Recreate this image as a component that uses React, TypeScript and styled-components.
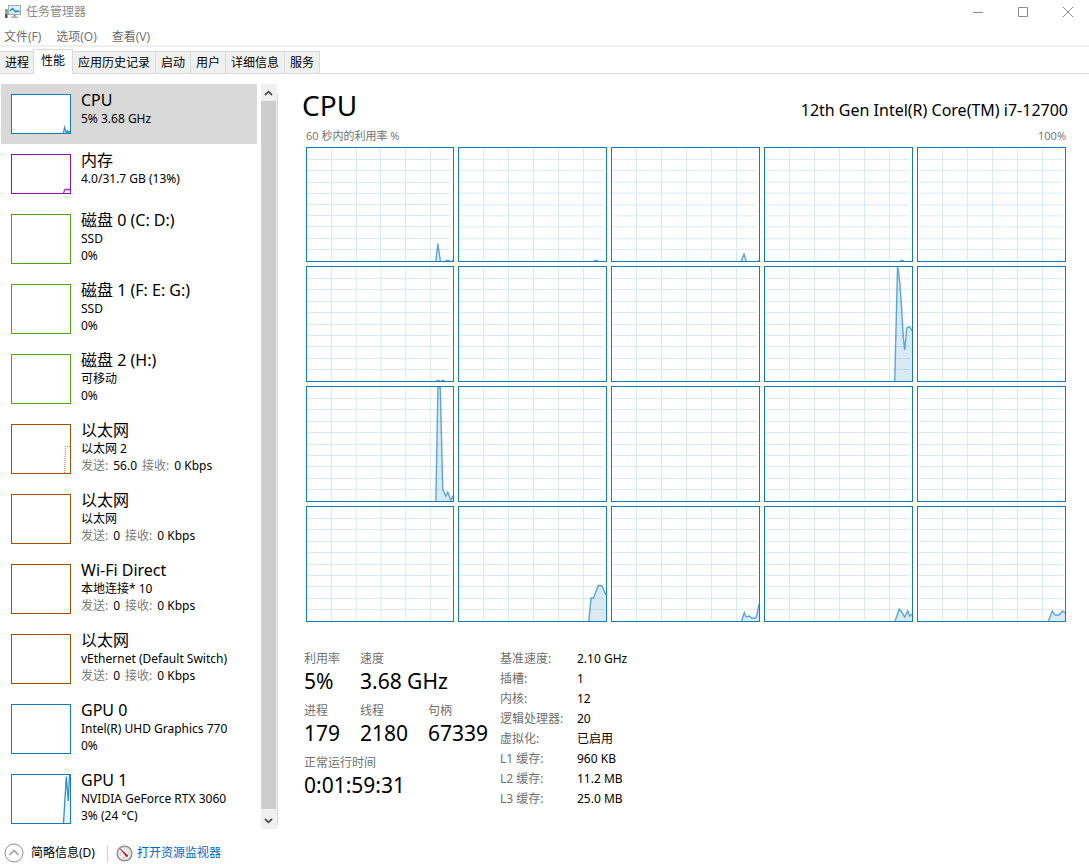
import React from 'react';
import styled, { createGlobalStyle } from 'styled-components';

const GlobalStyle = createGlobalStyle`
  * { box-sizing: border-box; }
  body {
    margin: 0;
    background: #fff;
    color: #000;
    font-family: "Noto Sans", "Noto Sans CJK SC", sans-serif;
    font-size: 12px;
    line-height: 16px;
  }
  button { font: inherit; color: inherit; border: 0; padding: 0; background: none; text-align: left; }
  h1, h2, p, dl, dt, dd { margin: 0; font-weight: 400; }
`;

const Window = styled.div`
  display: flex;
  flex-direction: column;
  min-height: 100vh;
`;

const TitleBar = styled.header`
  display: flex;
  align-items: center;
  height: 23px;
  padding: 0 1px 0 5px;
  gap: 5px;
  color: #8c8c8c;
`;

const WindowTitle = styled.span`
  flex: 1;
`;

const WindowButton = styled.button`
  display: flex;
  align-items: center;
  justify-content: center;
  width: 40px;
  height: 22px;
`;

const MenuBar = styled.nav`
  display: flex;
  gap: 15px;
  height: 24px;
  padding: 5px 4px 0;
  color: #6d6d6d;
  border-bottom: 2px solid #f0f0f0;
  font-family: "Open Sans", "Noto Sans CJK SC", sans-serif;
`;

const TabStrip = styled.div`
  display: flex;
  align-items: flex-end;
  height: 27px;
  border-bottom: 1px solid #d9d9d9;
`;

const Tab = styled.button<{ $active?: boolean }>`
  height: ${p => (p.$active ? 25 : 22)}px;
  margin: ${p => (p.$active ? '0 0 -1px -2px' : '0')};
  padding: ${p => (p.$active ? '0 7px 2px' : '0 5px')};
  background: ${p => (p.$active ? '#fff' : '#f0f0f0')};
  border: 1px solid #d9d9d9;
  border-bottom: 0;
  border-left-width: ${p => (p.$active ? 1 : 0)}px;
  white-space: nowrap;
`;

const Body = styled.div`
  display: flex;
  align-items: flex-start;
  padding-top: 10px;
`;

const Sidebar = styled.aside`
  display: flex;
  flex: none;
`;

const ResourceList = styled.div`
  width: 261px;
  padding: 0 4px 0 1px;
`;

const Resource = styled.button<{ $tall?: boolean; $selected?: boolean }>`
  display: flex;
  align-items: flex-start;
  gap: 10px;
  width: 100%;
  height: ${p => (p.$tall ? 70 : 60)}px;
  padding: 6px 0 0 10px;
  background: ${p => (p.$selected ? '#d9d9d9' : 'transparent')};
`;

const Thumb = styled.span<{ $color: string; $tall?: boolean }>`
  flex: none;
  width: 60px;
  height: ${p => (p.$tall ? 50 : 40)}px;
  margin-top: 4px;
  border: 1px solid ${p => p.$color};
  background: #fff;
  svg { display: block; width: 100%; height: 100%; }
`;

const ResourceText = styled.span`
  display: flex;
  flex-direction: column;
  line-height: 17px;
  white-space: nowrap;
`;

const ResourceName = styled.span`
  font-size: 16px;
  line-height: 20px;
`;

const Traffic = styled.span`
  display: flex;
  gap: 5px;
`;

const Muted = styled.span`
  color: #7a7a7a;
`;

const ScrollColumn = styled.div`
  display: flex;
  align-self: stretch;
  margin-bottom: 5px;
  padding-right: 1px;
  background: linear-gradient(#d9d9d9, #d9d9d9) right 0 top 10px / 1px calc(100% - 14px) no-repeat;
`;

const ScrollBar = styled.div`
  display: flex;
  flex-direction: column;
  width: 16px;
  background: #f0f0f0;
`;

const ScrollArrow = styled.button`
  display: flex;
  align-items: center;
  justify-content: center;
  height: 17px;
  padding-right: 1px;
`;

const ScrollThumb = styled.div`
  flex: 1;
  width: 15px;
  margin-bottom: 3px;
  background: #cdcdcd;
`;

const Main = styled.main`
  flex: 1;
  min-width: 0;
  padding: 0 23px 0 28px;
`;

const MainHeader = styled.div`
  display: flex;
  align-items: flex-start;
  justify-content: space-between;
  height: 44px;
  margin: 0 -2px 0 -4px;
`;

const MainTitle = styled.h1`
  font-size: 28px;
  line-height: 42px;
`;

const Model = styled.h2`
  padding-top: 14px;
  font-size: 16px;
  line-height: 24px;
`;

const Caption = styled.div`
  display: flex;
  justify-content: space-between;
  height: 19px;
  font-family: "Open Sans", "Noto Sans CJK SC", sans-serif;
  font-size: 11px;
  color: #707070;
`;

const ChartGrid = styled.div`
  display: grid;
  grid-template-columns: 148fr repeat(4, 149fr);
  grid-template-rows: 115px repeat(3, 116px);
  gap: 4px;
`;

const ChartCell = styled.div`
  border: 1px solid #117dbb;
  svg { display: block; width: 100%; height: 100%; }
`;

const Stats = styled.section`
  display: flex;
  gap: 12px;
  margin: 28px 0 0 -2px;
`;

const Figures = styled.dl`
  display: grid;
  grid-template-columns: 56px 68px 60px;
  grid-auto-rows: 52px;
  white-space: nowrap;
`;

const Figure = styled.div<{ $row: number; $col: number }>`
  grid-row: ${p => p.$row};
  grid-column: ${p => p.$col};
  dt { line-height: 18px; color: #707070; }
  dd { font-size: 21px; line-height: 26px; }
`;

const Details = styled.dl`
  display: grid;
  grid-template-columns: 77px auto;
  grid-auto-rows: 20px;
  line-height: 18px;
  white-space: nowrap;
  dt { color: #707070; }
`;

const Footer = styled.footer`
  display: flex;
  align-items: center;
  height: 22px;
  margin-top: 8px;
  padding-left: 4px;
`;

const FewerButton = styled.button`
  display: flex;
  align-items: center;
  gap: 7px;
  padding-right: 12px;
`;

const MonitorLink = styled.a`
  display: flex;
  align-items: center;
  gap: 4px;
  padding-left: 8px;
  border-left: 1px solid #d0d0d0;
  line-height: 14px;
  color: #0066cc;
  text-decoration: none;
`;

type Points = [number, number][];

const toPath = (points: Points) => points.map(([x, y]) => `${x},${y}`).join(' ');

const V_LINES = [24, 49, 74, 99, 124];
const H_LINES = [11, 22, 34, 45, 57, 68, 79, 91, 102];

function CoreChart({ points, index }: { points?: Points; index: number }) {
  return (
    <ChartCell>
      <svg viewBox="0 0 147 114" preserveAspectRatio="none" role="img" aria-label={`CPU ${index}`}>
        <g stroke="#d9eaf4" shapeRendering="crispEdges">
          {V_LINES.map(x => <line key={x} x1={x + 0.5} x2={x + 0.5} y1="0" y2="114" />)}
          {H_LINES.map(y => <line key={y} x1="0" x2="145" y1={y + 0.5} y2={y + 0.5} />)}
        </g>
        {points && (
          <>
            <polygon
              points={`${toPath(points)} ${points[points.length - 1][0]},115`}
              fill="#117dbb"
              fillOpacity="0.16"
            />
            <polyline
              points={toPath(points)}
              fill="none"
              stroke="#117dbb"
              strokeOpacity="0.65"
              strokeWidth="1.4"
            />
          </>
        )}
      </svg>
    </ChartCell>
  );
}

const CORES: (Points | undefined)[] = [
  [[129.7, 115], [131.7, 96.5], [134.5, 115], [139, 115], [140, 113.5], [143, 113.5], [144, 115], [147, 113.5]],
  [[134.5, 115], [136, 113.5], [138, 113.5], [139.5, 115]],
  [[129, 115], [132, 107], [134.5, 115], [145, 115], [147, 113.5]],
  [[135, 115], [136, 113.5], [138, 113.5], [139, 115]],
  undefined,
  [[130, 115], [131, 113.5], [133, 113.5], [134, 115], [136, 113.5], [138, 113.5], [139, 115]],
  undefined,
  undefined,
  [[129.7, 115], [132.5, 0], [133.5, 4], [135, 18], [136.7, 42], [138.3, 70], [139.7, 83], [141.7, 61], [144.5, 59.5], [147, 64]],
  undefined,
  [[129.7, 115], [131.8, 0.5], [134.2, 0.5], [136.7, 102], [139.7, 109], [141.7, 105], [144.7, 113], [147, 109]],
  undefined,
  undefined,
  undefined,
  undefined,
  undefined,
  [[129.7, 115], [132, 91], [134.5, 91], [139.3, 78.5], [142.7, 78.5], [147, 88]],
  [[129.3, 115], [132.3, 105.5], [134.3, 110], [137.3, 109], [139.7, 111], [143.3, 111], [144.7, 109], [147, 97]],
  [[129.7, 115], [134.3, 102], [136.7, 105], [139.7, 110], [142.7, 104], [144.7, 109], [147, 107]],
  [[130, 115], [134.3, 104], [137, 108], [141, 108], [144.7, 104], [147, 106]],
];

const BLUE = '#117dbb';
const PURPLE = '#8b12ae';
const GREEN = '#4da60c';
const BROWN = '#a74f01';

interface ResourceData {
  name: string;
  color: string;
  sub: string;
  usage?: string;
  net?: [string, string];
  points?: Points;
  line?: string;
  dash?: string;
}

const RESOURCES: ResourceData[] = [
  { name: 'CPU', color: BLUE, sub: '5% 3.68 GHz', points: [[51.5, 38], [52.5, 32.5], [54.5, 38], [55.5, 36], [56.5, 38], [58, 36]] },
  { name: '内存', color: PURPLE, sub: '4.0/31.7 GB (13%)', points: [[51.5, 38], [53, 34.5], [58, 34.5]] },
  { name: '磁盘 0 (C: D:)', color: GREEN, sub: 'SSD', usage: '0%' },
  { name: '磁盘 1 (F: E: G:)', color: GREEN, sub: 'SSD', usage: '0%' },
  { name: '磁盘 2 (H:)', color: GREEN, sub: '可移动', usage: '0%' },
  { name: '以太网', color: BROWN, sub: '以太网 2', net: ['56.0', '0 Kbps'], points: [[52.5, 48], [53.5, 21.5], [58, 21.5]], line: '#e0754a', dash: '1 1' },
  { name: '以太网', color: BROWN, sub: '以太网', net: ['0', '0 Kbps'] },
  { name: 'Wi-Fi Direct', color: BROWN, sub: '本地连接* 10', net: ['0', '0 Kbps'] },
  { name: '以太网', color: BROWN, sub: 'vEthernet (Default Switch)', net: ['0', '0 Kbps'] },
  { name: 'GPU 0', color: BLUE, sub: 'Intel(R) UHD Graphics 770', usage: '0%' },
  { name: 'GPU 1', color: BLUE, sub: 'NVIDIA GeForce RTX 3060', usage: '3% (24 °C)', points: [[51.5, 48], [54.3, 1.5], [56.3, 26], [57.5, 0]] },
];

function ResourceRow({ item, selected }: { item: ResourceData; selected: boolean }) {
  const tall = Boolean(item.usage || item.net);
  const height = tall ? 48 : 38;
  return (
    <Resource $tall={tall} $selected={selected} aria-pressed={selected}>
      <Thumb $color={item.color} $tall={tall}>
        {item.points && (
          <svg viewBox={`0 0 58 ${height}`} aria-hidden="true">
            {!item.dash && (
              <polygon points={`${toPath(item.points)} 58,${height}`} fill={item.color} fillOpacity="0.08" />
            )}
            <polyline
              points={toPath(item.points)}
              fill="none"
              stroke={item.line ?? item.color}
              strokeOpacity="0.85"
              strokeWidth="1.3"
              strokeDasharray={item.dash}
            />
          </svg>
        )}
      </Thumb>
      <ResourceText>
        <ResourceName>{item.name}</ResourceName>
        <span>{item.sub}</span>
        {item.usage && <span>{item.usage}</span>}
        {item.net && (
          <Traffic>
            <Muted>发送:</Muted>
            <span>{item.net[0]}</span>
            <Muted>接收:</Muted>
            <span>{item.net[1]}</span>
          </Traffic>
        )}
      </ResourceText>
    </Resource>
  );
}

const AppIcon = () => (
  <svg width="16" height="16" viewBox="0 0 16 16" aria-hidden="true">
    <rect x="0" y="5" width="3" height="9" fill="#9a9d9f" />
    <rect x="0" y="6" width="3" height="1" fill="#4fc45a" />
    <rect x="0" y="10" width="2" height="4" fill="#55585a" />
    <rect x="3.500" y="1.500" width="12" height="9" fill="#d9f3fd" stroke="#a3a7aa" />
    <path d="M5 7l2.500-2.500 3.500 3.500 1.500-1.500 2 1.500" fill="none" stroke="#1b87bd" strokeWidth="1.3" />
    <path d="M8 11h3v1.500h2V14H6v-1.500h2z" fill="#adb1b3" />
  </svg>
);

const GaugeIcon = () => (
  <svg width="17" height="17" viewBox="0 0 17 17" aria-hidden="true">
    <circle cx="8.500" cy="8.500" r="7.400" fill="#fbfbfb" stroke="#858789" strokeWidth="1.300" />
    <circle cx="8.500" cy="8.500" r="6.300" fill="none" stroke="#cfcac6" />
    <path d="M4.500 10.500A4.500 4.500 0 0 1 4.600 6.500M8 4a4.500 4.500 0 0 1 4.500 6.500" fill="none" stroke="#8b8d8f" strokeDasharray="1 1.200" />
    <path d="M4.300 3.900L12 10.800 10.700 12z" fill="#d3151c" stroke="#d3151c" strokeWidth="0.800" />
    <path d="M6.500 12.700h3" stroke="#a5a8aa" />
  </svg>
);

const FIGURES = [
  ['利用率', '5%', 1, 1], ['速度', '3.68 GHz', 1, 2],
  ['进程', '179', 2, 1], ['线程', '2180', 2, 2], ['句柄', '67339', 2, 3],
  ['正常运行时间', '0:01:59:31', 3, 1],
] as const;

const DETAILS = [
  ['基准速度:', '2.10 GHz'], ['插槽:', '1'], ['内核:', '12'], ['逻辑处理器:', '20'],
  ['虚拟化:', '已启用'], ['L1 缓存:', '960 KB'], ['L2 缓存:', '11.2 MB'], ['L3 缓存:', '25.0 MB'],
];

const TABS = ['进程', '性能', '应用历史记录', '启动', '用户', '详细信息', '服务'];

export default function App() {
  return (
    <Window>
      <GlobalStyle />
      <TitleBar>
        <AppIcon />
        <WindowTitle>任务管理器</WindowTitle>
        <WindowButton aria-label="最小化">
          <svg width="10" height="10" viewBox="0 0 10 10"><path d="M0 5.5h10" stroke="#8c8c8c" /></svg>
        </WindowButton>
        <WindowButton aria-label="最大化">
          <svg width="10" height="10" viewBox="0 0 10 10"><path d="M.5.5h9v9h-9z" fill="none" stroke="#8c8c8c" /></svg>
        </WindowButton>
        <WindowButton aria-label="关闭">
          <svg width="10" height="10" viewBox="0 0 10 10"><path d="M0 0l10 10M10 0L0 10" stroke="#8c8c8c" /></svg>
        </WindowButton>
      </TitleBar>
      <MenuBar>
        <button>文件(F)</button>
        <button>选项(O)</button>
        <button>查看(V)</button>
      </MenuBar>
      <TabStrip role="tablist">
        {TABS.map(t => (
          <Tab key={t} role="tab" $active={t === '性能'} aria-selected={t === '性能'}>{t}</Tab>
        ))}
      </TabStrip>
      <Body>
        <Sidebar>
          <ResourceList>
            {RESOURCES.map((r, i) => <ResourceRow key={i} item={r} selected={i === 0} />)}
          </ResourceList>
          <ScrollColumn>
            <ScrollBar>
              <ScrollArrow aria-label="向上滚动">
                <svg width="9" height="6" viewBox="0 0 9 6"><path d="M1 5L4.5 1.7 8 5" fill="none" stroke="#505050" strokeWidth="1.8" /></svg>
              </ScrollArrow>
              <ScrollThumb />
              <ScrollArrow aria-label="向下滚动">
                <svg width="9" height="6" viewBox="0 0 9 6"><path d="M1 1l3.500 3.300L8 1" fill="none" stroke="#505050" strokeWidth="1.8" /></svg>
              </ScrollArrow>
            </ScrollBar>
          </ScrollColumn>
        </Sidebar>
        <Main>
          <MainHeader>
            <MainTitle>CPU</MainTitle>
            <Model>12th Gen Intel(R) Core(TM) i7-12700</Model>
          </MainHeader>
          <Caption>
            <span>60 秒内的利用率 %</span>
            <span>100%</span>
          </Caption>
          <ChartGrid>
            {CORES.map((c, i) => <CoreChart key={i} index={i} points={c} />)}
          </ChartGrid>
          <Stats>
            <Figures>
              {FIGURES.map(([label, value, row, col]) => (
                <Figure key={label} $row={row} $col={col}>
                  <dt>{label}</dt>
                  <dd>{value}</dd>
                </Figure>
              ))}
            </Figures>
            <Details>
              {DETAILS.map(([k, v]) => (
                <React.Fragment key={k}>
                  <dt>{k}</dt>
                  <dd>{v}</dd>
                </React.Fragment>
              ))}
            </Details>
          </Stats>
        </Main>
      </Body>
      <Footer>
        <FewerButton>
          <svg width="20" height="20" viewBox="0 0 20 20" aria-hidden="true">
            <circle cx="10" cy="10" r="9" fill="#fff" stroke="#8f8f8f" />
            <path d="M5.5 12L10 7.500l4.500 4.500" fill="none" stroke="#a0a0a0" strokeWidth="1.6" />
          </svg>
          简略信息(D)
        </FewerButton>
        <MonitorLink href="#resmon">
          <GaugeIcon />
          打开资源监视器
        </MonitorLink>
      </Footer>
    </Window>
  );
}
